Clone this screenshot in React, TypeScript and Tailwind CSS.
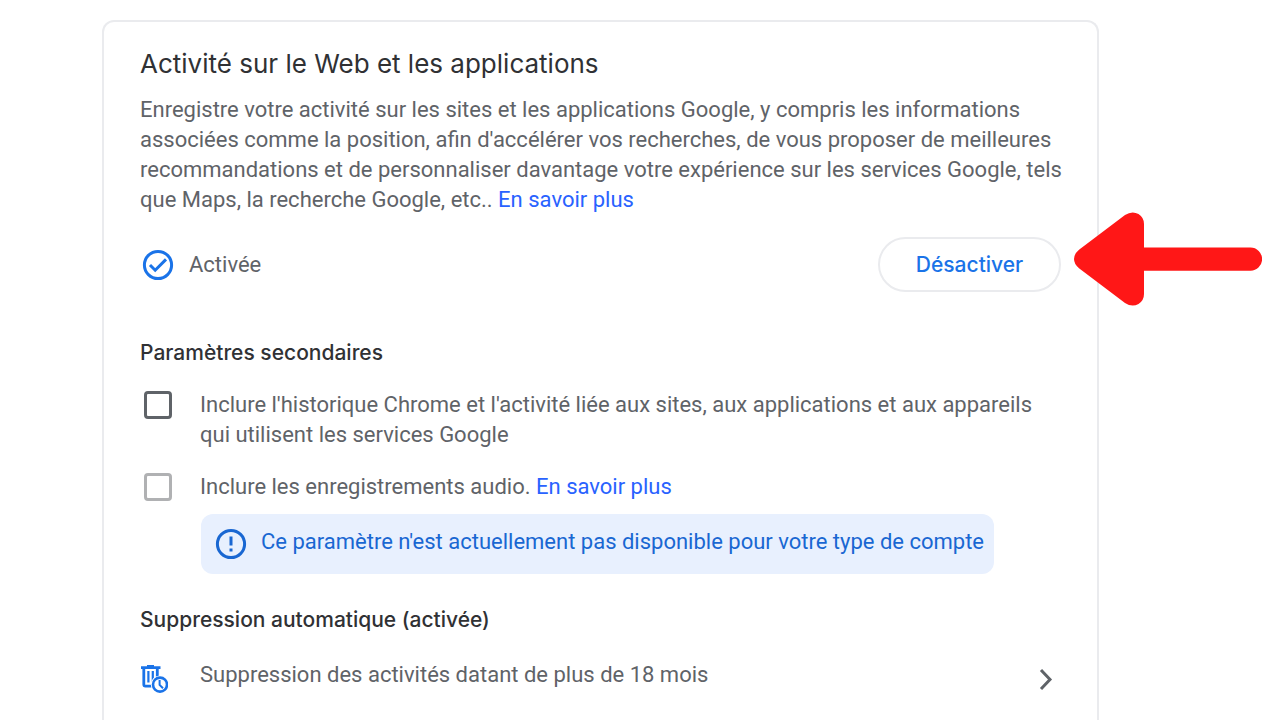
import { useState } from 'react'

function CheckCircleIcon() {
  return (
    <svg viewBox="0 0 36 36" className="size-9 shrink-0 text-[#1a73e8]" fill="none" stroke="currentColor" strokeWidth="3" aria-hidden="true">
      <circle cx="18" cy="18" r="13.6" />
      <path d="M10 18l5.2 5.2L26 12.4" />
    </svg>
  )
}

function NoticeIcon() {
  return (
    <svg viewBox="0 0 36 36" className="size-9 shrink-0 text-[#1967d2]" fill="none" stroke="currentColor" strokeWidth="3" aria-hidden="true">
      <circle cx="18" cy="18" r="13.6" />
      <path d="M18 10.5v9M18 22.5v3" />
    </svg>
  )
}

function AutoDeleteIcon() {
  return (
    <svg viewBox="0 0 28 28" className="size-7 shrink-0 text-[#1a73e8]" fill="none" stroke="currentColor" aria-hidden="true">
      <path d="M1 2.6h19.5M7 1.4h7" strokeWidth="2.6" />
      <path d="M3.8 3v16.6q0 1.6 1.6 1.6h10.3q1.6 0 1.6-1.6V3" strokeWidth="2.8" />
      <path d="M8.4 6v11.6M12.8 6v11.6" strokeWidth="2.2" />
      <circle cx="20" cy="19.6" r="9.2" fill="#fff" stroke="none" />
      <circle cx="20" cy="19.6" r="7" strokeWidth="2.6" />
      <path d="M19.6 15v4.9l3.4 3.4" strokeWidth="2" />
    </svg>
  )
}

function ArrowPointer() {
  return (
    <svg viewBox="0 0 188 94" className="absolute left-full -top-[25px] ml-[13px] h-[94px] w-[188px] max-w-none" fill="#ff1717" aria-hidden="true">
      <path d="M5 37.8L51 3Q58-1.6 64.5 2Q70 5.500 70 12V35.500H176.500A11.600 11.600 0 0 1 176.500 58.700H70V82Q70 88.500 64.500 92Q58 95.600 51 91L5 56.200Q0 52 0 47T5 37.800Z" />
    </svg>
  )
}

export default function App() {
  const [history, setHistory] = useState(false)

  return (
    <main className="flex min-h-screen overflow-hidden bg-white pt-5 pr-[181px] pl-[102px] font-[Roboto,sans-serif] text-[22px] leading-[30px] text-[#5f6368]">
      <section className="min-w-0 flex-1 rounded-t-xl border-2 border-b-0 border-[#eaebee] px-9 pt-6 pb-5">
        <h1 className="font-[Inter,sans-serif] text-[26px] leading-9 text-[#303134]">
          Activité sur le Web et les applications
        </h1>
        <p className="mt-[13px] -mr-2">
          Enregistre votre activité sur les sites et les applications Google, y compris les informations
          associées comme la position, afin d'accélérer vos recherches, de vous proposer de meilleures
          recommandations et de personnaliser davantage votre expérience sur les services Google, tels
          que Maps, la recherche Google, etc..{' '}
          <a href="#activite" className="text-[#2962ff]">En savoir plus</a>
        </p>

        <div className="mt-[22px] flex items-center justify-between">
          <div className="flex items-center gap-[13px]">
            <CheckCircleIcon />
            <span>Activée</span>
          </div>
          <div className="relative">
            <button
              type="button"
              className="block h-[55px] w-[183px] rounded-full border-2 border-[#eaebee] font-[Inter,sans-serif] text-[21px] font-medium text-[#1a73e8]"
            >
              Désactiver
            </button>
            <ArrowPointer />
          </div>
        </div>

        <h2 className="mt-[46px] font-[Inter,sans-serif] text-[21px] font-medium text-[#303134]">Paramètres secondaires</h2>

        <div className="mt-[22px] flex items-start pl-1">
          <input
            id="history"
            type="checkbox"
            checked={history}
            onChange={e => setHistory(e.target.checked)}
            className="mt-px size-7 shrink-0 appearance-none rounded-sm border-3 border-[#5f6368] checked:bg-[#1a73e8]"
          />
          <label htmlFor="history" className="ml-7">
            Inclure l'historique Chrome et l'activité liée aux sites, aux applications et aux appareils
            qui utilisent les services Google
          </label>
        </div>

        <div className="mt-[22px] flex items-start pl-1">
          <input
            id="audio"
            type="checkbox"
            disabled
            className="mt-px size-7 shrink-0 appearance-none rounded-sm border-3 border-[#b0b1b3]"
          />
          <div className="ml-7">
            <label htmlFor="audio">Inclure les enregistrements audio.</label>{' '}
            <a href="#audio" className="text-[#2962ff]">En savoir plus</a>
          </div>
        </div>
        <div className="mt-3 mr-[67px] ml-[61px] flex h-[60px] items-center gap-3 rounded-xl bg-[#e8f0fe] px-3 whitespace-nowrap text-[#1967d2]">
          <NoticeIcon />
          <span className="pb-1">Ce paramètre n'est actuellement pas disponible pour votre type de compte</span>
        </div>

        <h2 className="mt-[31px] font-[Inter,sans-serif] text-[21px] font-medium text-[#303134]">Suppression automatique (activée)</h2>
        <a href="#suppression" className="mt-[25px] flex items-center">
          <AutoDeleteIcon />
          <span className="ml-8 flex-1 pb-2">Suppression des activités datant de plus de 18 mois</span>
          <svg viewBox="0 0 28 28" className="size-7 shrink-0" fill="none" stroke="currentColor" strokeWidth="3" aria-hidden="true">
            <path d="M8 5l9 9.500L8 24" />
          </svg>
        </a>
      </section>
    </main>
  )
}
